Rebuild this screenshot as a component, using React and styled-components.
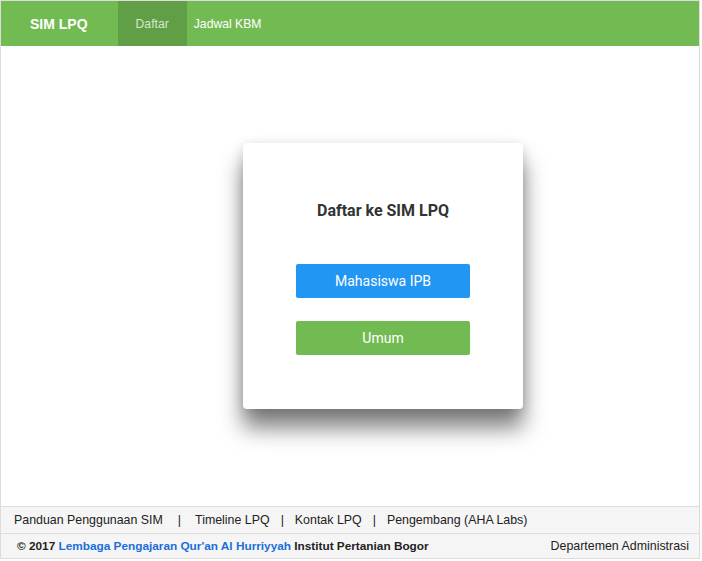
import React from 'react';
import styled, { createGlobalStyle } from 'styled-components';

const GlobalStyle = createGlobalStyle`
  html, body {
    margin: 0;
    padding: 0;
    background: #fff;
  }
  * {
    box-sizing: border-box;
  }
`;

const Page = styled.div`
  width: 700px;
  height: 559px;
  border: 1px solid #dcdcdc;
  display: flex;
  flex-direction: column;
  font-family: "Liberation Sans", Arial, sans-serif;
`;

const Navbar = styled.nav`
  height: 45px;
  background: #72bb53;
  display: flex;
  align-items: stretch;
  flex-shrink: 0;
`;

const Brand = styled.div`
  display: flex;
  align-items: center;
  padding: 0 30px 0 29px;
  color: #fff;
  font-weight: bold;
  font-size: 14px;
`;

const NavLink = styled.a`
  display: flex;
  align-items: center;
  padding: ${p => (p.$active ? '0 18px' : '0 7px')};
  background: ${p => (p.$active ? '#619f47' : 'transparent')};
  color: ${p => (p.$active ? '#d4e6cc' : '#fff')};
  font-size: 12.2px;
  text-decoration: none;
`;

const Main = styled.main`
  flex: 1;
  display: flex;
  align-items: center;
  justify-content: center;
  padding-left: 66px;
`;

const Card = styled.section`
  width: 280px;
  height: 266px;
  background: #fff;
  border-radius: 4px;
  box-shadow: 0 19px 22px rgba(0, 0, 0, 0.5), 0 2px 12px rgba(0, 0, 0, 0.14);
  display: flex;
  flex-direction: column;
  align-items: center;
  padding-top: 58px;
  font-family: Roboto, "Liberation Sans", sans-serif;
`;

const CardTitle = styled.h3`
  margin: 0 0 44px;
  font-size: 16px;
  font-weight: bold;
  color: #333;
  line-height: 19px;
`;

const Button = styled.button`
  width: 174px;
  height: 34px;
  border: none;
  border-radius: 2px;
  background: ${p => p.$color};
  color: #fff;
  font-family: Roboto, "Liberation Sans", sans-serif;
  font-size: 14px;
  margin-bottom: 23px;
  cursor: pointer;
`;

const Footer = styled.footer`
  flex-shrink: 0;
  background: #f5f5f5;
  border-top: 1px solid #dedede;
  font-size: 12.4px;
  color: #222;
`;

const FooterLinks = styled.div`
  height: 27px;
  display: flex;
  align-items: center;
  padding-left: 13px;
  border-bottom: 1px solid #dedede;
`;

const FooterLink = styled.a`
  color: #222;
  text-decoration: none;
`;

const Sep = styled.span`
  padding: 0 ${p => (p.$wide ? '14px' : '11px')} 0 ${p => (p.$wide ? '15px' : '11px')};
`;

const Copyright = styled.div`
  height: 24px;
  display: flex;
  align-items: center;
  justify-content: space-between;
  padding: 0 10px 0 16px;
`;

const Bold = styled.span`
  font-weight: bold;
  font-size: 11.8px;
`;

const OrgLink = styled.a`
  color: #1a6fdb;
  text-decoration: none;
  font-weight: bold;
  font-size: 11.8px;
`;

export default function App() {
  return (
    <>
      <GlobalStyle />
      <Page>
        <Navbar>
          <Brand>SIM LPQ</Brand>
          <NavLink $active>Daftar</NavLink>
          <NavLink>Jadwal KBM</NavLink>
        </Navbar>

        <Main>
          <Card>
            <CardTitle>Daftar ke SIM LPQ</CardTitle>
            <Button $color="#2196f3">Mahasiswa IPB</Button>
            <Button $color="#72bb53">Umum</Button>
          </Card>
        </Main>

        <Footer>
          <FooterLinks>
            <FooterLink>Panduan Penggunaan SIM</FooterLink>
            <Sep $wide>|</Sep>
            <FooterLink>Timeline LPQ</FooterLink>
            <Sep>|</Sep>
            <FooterLink>Kontak LPQ</FooterLink>
            <Sep>|</Sep>
            <FooterLink>Pengembang (AHA Labs)</FooterLink>
          </FooterLinks>
          <Copyright>
            <span>
              <Bold>© 2017 </Bold>
              <OrgLink>Lembaga Pengajaran Qur'an Al Hurriyyah</OrgLink>
              <Bold> Institut Pertanian Bogor</Bold>
            </span>
            <span>Departemen Administrasi</span>
          </Copyright>
        </Footer>
      </Page>
    </>
  );
}
